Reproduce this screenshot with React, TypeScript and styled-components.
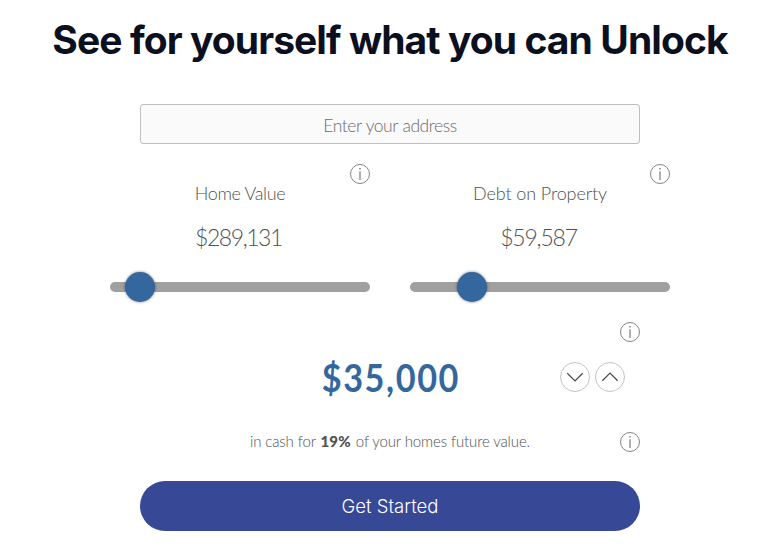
import React from "react";
import styled, { createGlobalStyle } from "styled-components";

const GlobalStyle = createGlobalStyle`
  *, *::before, *::after { box-sizing: border-box; }
  body { margin: 0; background: #fff; font-family: Lato, "Open Sans", sans-serif; color: #505153; }
`;

const Page = styled.main`
  width: 781px;
  height: 554px;
  padding-right: 1px;
  overflow: hidden;
  display: flex;
  flex-direction: column;
  align-items: center;
`;

const Title = styled.h1`
  margin: 10px 0 0;
  height: 60px;
  line-height: 60px;
  font-family: Inter, sans-serif;
  font-size: 39px;
  font-weight: 700;
  letter-spacing: -0.92px;
  color: #0b1020;
  white-space: nowrap;
`;

const AddressInput = styled.input`
  width: 500px;
  height: 40px;
  margin-top: 34px;
  padding: 2px 0 0;
  border: 1px solid #bfbfbf;
  border-radius: 3px;
  background: #fafafa;
  outline: none;
  text-align: center;
  font-family: Lato, sans-serif;
  font-size: 17.5px;
  font-weight: 300;
  letter-spacing: -0.45px;
  word-spacing: 0.5px;
  &::placeholder { color: #6c6c6c; opacity: 1; }
`;

const Sliders = styled.section`
  display: grid;
  grid-template-columns: 260px 260px;
  column-gap: 40px;
  margin-top: 20px;
`;

const Field = styled.div`
  display: flex;
  flex-direction: column;
  align-items: center;
`;

const InfoButton = styled.button`
  display: block;
  align-self: flex-end;
  width: 20px;
  height: 20px;
  padding: 0;
  border: 0;
  background: none;
  svg { display: block; }
`;

const Label = styled.span<{ $track: number }>`
  height: 24px;
  margin-top: -3px;
  line-height: 24px;
  font-size: 18px;
  font-weight: 300;
  letter-spacing: ${(p) => p.$track}px;
  white-space: nowrap;
`;

const Value = styled.span<{ $track: number }>`
  height: 30px;
  margin-top: 17px;
  padding-right: 3px;
  line-height: 30px;
  font-size: 23px;
  font-weight: 300;
  letter-spacing: ${(p) => p.$track}px;
  white-space: nowrap;
`;

const Track = styled.div`
  position: relative;
  width: 260px;
  height: 10px;
  margin-top: 30px;
  border-radius: 5px;
  background: #a0a0a0;
`;

const Thumb = styled.span<{ $left: number }>`
  position: absolute;
  top: -10px;
  left: ${(p) => p.$left}px;
  width: 30px;
  height: 30px;
  border-radius: 50%;
  background: #34679d;
  box-shadow: 0 0 3px rgba(0, 0, 0, 0.5);
`;

const Offer = styled.section`
  width: 500px;
  margin-top: 30px;
  display: flex;
  flex-direction: column;
`;

const AmountRow = styled.div`
  display: grid;
  grid-template-columns: 1fr auto 1fr;
  align-items: center;
  height: 50px;
  margin-top: 10px;
`;

const Amount = styled.strong`
  grid-column: 2;
  margin-right: -1.8px;
  line-height: 50px;
  font-size: 38px;
  font-weight: 700;
  letter-spacing: 1.8px;
  transform: scaleX(0.9);
  color: #34679d;
`;

const Stepper = styled.div`
  justify-self: end;
  display: flex;
  gap: 5px;
  padding-right: 15px;
`;

const StepButton = styled.button`
  display: flex;
  align-items: center;
  justify-content: center;
  width: 30px;
  height: 30px;
  padding: 0;
  border: 1px solid #c3c3c3;
  border-radius: 50%;
  background: #fff;
`;

const TermsRow = styled.div`
  display: grid;
  grid-template-columns: 1fr auto 1fr;
  align-items: center;
  height: 24px;
  margin-top: 28px;
  ${InfoButton} { align-self: center; justify-self: end; }
`;

const Terms = styled.p`
  grid-column: 2;
  margin: 0 0 2px;
  line-height: 22px;
  font-size: 15px;
  font-weight: 300;
  letter-spacing: -0.12px;
  white-space: nowrap;
  b { margin: 0 1px; font-weight: 900; letter-spacing: 0.2px; }
`;

const StartButton = styled.button`
  width: 500px;
  height: 50px;
  margin-top: 27px;
  padding: 0;
  border: 0;
  border-radius: 25px;
  background: #374896;
  color: #fff;
  font-family: Inter, sans-serif;
  font-size: 18.5px;
  font-weight: 300;
`;

const Info = () => (
  <InfoButton aria-label="More information">
    <svg width="20" height="20" viewBox="0 0 20 20" fill="none" stroke="#858585">
      <circle cx="10" cy="10" r="9.5" />
      <path d="M10 7.3V16" stroke="#8d8d8d" strokeWidth="1.4" />
      <path d="M10 4V5.6" stroke="#8d8d8d" strokeWidth="1.6" />
    </svg>
  </InfoButton>
);

const Chevron = ({ up = false }: { up?: boolean }) => (
  <svg width="18" height="10" viewBox="0 0 18 10" fill="none" stroke="#4b4b4b" strokeWidth="1.3">
    <path d={up ? "M1.3 8.8L9 1.1L16.7 8.8" : "M1.3 1.2L9 8.9L16.7 1.2"} />
  </svg>
);

const fields = [
  { label: "Home Value", labelTrack: -0.35, value: "$289,131", valueTrack: -1.45, thumb: 15 },
  { label: "Debt on Property", labelTrack: -0.1, value: "$59,587", valueTrack: -1.2, thumb: 47 },
];

export default function App() {
  return (
    <>
      <GlobalStyle />
      <Page>
        <Title>See for yourself what you can Unlock</Title>
        <AddressInput placeholder="Enter your address" />
        <Sliders>
          {fields.map((f) => (
            <Field key={f.label}>
              <Info />
              <Label $track={f.labelTrack}>{f.label}</Label>
              <Value $track={f.valueTrack}>{f.value}</Value>
              <Track>
                <Thumb $left={f.thumb} />
              </Track>
            </Field>
          ))}
        </Sliders>
        <Offer>
          <Info />
          <AmountRow>
            <Amount>$35,000</Amount>
            <Stepper>
              <StepButton aria-label="Decrease"><Chevron /></StepButton>
              <StepButton aria-label="Increase"><Chevron up /></StepButton>
            </Stepper>
          </AmountRow>
          <TermsRow>
            <Terms>in cash for <b>19%</b> of your homes future value.</Terms>
            <Info />
          </TermsRow>
        </Offer>
        <StartButton>Get Started</StartButton>
      </Page>
    </>
  );
}
